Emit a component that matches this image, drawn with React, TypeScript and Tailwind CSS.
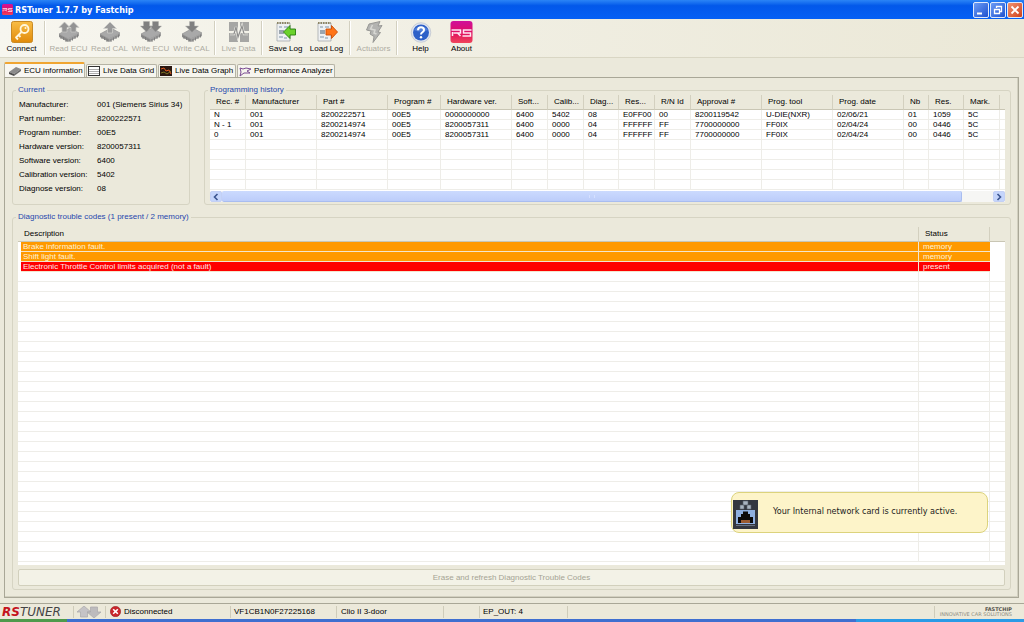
import type { ReactNode } from "react";

const chipBody = (
  <>
    <path d="M1 13 L12 7 L21 12 L10 18 Z" fill="#a9a9a9" stroke="#8d8d8d" strokeWidth="0.6" />
    <path d="M1 13 L10 18 V21 L1 16 Z" fill="#8a8a8a" />
    <path d="M10 18 L21 12 V15 L10 21 Z" fill="#9c9c9c" />
    <path d="M3 15v3M5.500 16v3M8 18v3M12 18v3M14.500 16.500v3M17 15v3M19.500 13.500v3" stroke="#7c7c7c" strokeWidth="0.9" />
  </>
);

function ReadEcu() {
  return (
    <svg viewBox="0 0 22 22" className="size-[22px]">
      {chipBody}
      <path d="M6.500 1 L12 6.500 H9 V11 H4 V6.500 H1 Z M15.500 1 L21 6.500 H18 V11 H13 V6.500 H10 Z" fill="#939393" stroke="#c9c9c5" strokeWidth="0.7" />
    </svg>
  );
}

function ReadCal() {
  return (
    <svg viewBox="0 0 22 22" className="size-[22px]">
      {chipBody}
      <path d="M11 1 L17.500 7.500 H13.500 V12 H8.500 V7.500 H4.500 Z" fill="#999" stroke="#d0d0cc" strokeWidth="0.7" />
    </svg>
  );
}

function WriteEcu() {
  return (
    <svg viewBox="0 0 22 22" className="size-[22px]">
      {chipBody}
      <path d="M3.500 0.500 H9.500 V5 H12 L6.500 11 L0.500 5 H3.500 Z M12.500 0.500 H18.500 V5 H21.500 L15.500 11 L10 5 H12.500 Z" fill="#808080" stroke="#a8a8a6" strokeWidth="0.4" />
    </svg>
  );
}

function WriteCal() {
  return (
    <svg viewBox="0 0 22 22" className="size-[22px]">
      {chipBody}
      <path d="M8.500 0.500 H13.500 V5 H17.500 L11 11.500 L4.500 5 H8.500 Z" fill="#808080" stroke="#b5b5b2" strokeWidth="0.5" />
    </svg>
  );
}

function KeyIcon() {
  return (
    <svg viewBox="0 0 22 22" className="size-[22px]">
      <defs>
        <linearGradient id="key-bg" x1="0" y1="0" x2="0" y2="1">
          <stop offset="0" stopColor="#f9bd45" />
          <stop offset="1" stopColor="#e18a0a" />
        </linearGradient>
      </defs>
      <rect x="0.5" y="0.5" width="21" height="21" rx="2" fill="url(#key-bg)" stroke="#c98a24" />
      <circle cx="13.500" cy="8" r="4" fill="none" stroke="#fff6dc" strokeWidth="1.800" />
      <circle cx="14.500" cy="7" r="1" fill="#fff6dc" />
      <path d="M10.500 11 L4.500 17 M5 16.500 L7 18.500 M7.500 14 L9.500 16" stroke="#fff6dc" strokeWidth="1.800" fill="none" />
    </svg>
  );
}

function LiveIcon() {
  return (
    <svg viewBox="0 0 22 22" className="size-[22px]">
      <path d="M1 1h9v9h-9zM12 1h9v9h-9zM1 12h9v9h-9zM12 12h9v9h-9z" fill="#a6a6a4" />
      <path d="M2 13 H6 L8 6 L10 16 L14 5 L16 13 H20" fill="none" stroke="#efeee8" strokeWidth="2.400" />
      <path d="M2 13 H6 L8 6 L10 16 L14 5 L16 13 H20" fill="none" stroke="#8d8d8c" strokeWidth="1.200" />
    </svg>
  );
}

function LogIcon({ load }: { load?: boolean }) {
  return (
    <svg viewBox="0 0 22 22" className="size-[22px]">
      <path d="M2 2h13v18h-13z" fill="#eef0f2" stroke="#a5a9ad" strokeWidth="0.8" />
      <path d="M2 2h13" stroke="#8d8564" strokeWidth="1.800" strokeDasharray="1.5 1" />
      <path d="M4 6h3M4 16h4M9 6h4M9 17h3" stroke="#7d93a8" strokeWidth="1" />
      <path d="M4 9h5v4h-5z" fill="#9ba5af" />
      {load ? (
        <path d="M21.500 11 L15.500 4.500 V8 H10 V14 H15.500 V17.500 Z" fill="#ff7417" stroke="#c94d08" strokeWidth="0.9" />
      ) : (
        <path d="M8.500 11 L15 4.500 V8 H20.500 V14 H15 V17.500 Z" fill="#6bd22c" stroke="#277c0d" strokeWidth="0.9" />
      )}
    </svg>
  );
}

function BoltIcon() {
  return (
    <svg viewBox="0 0 22 22" className="size-[22px]">
      <path d="M6 3 L17 0.500 L15 5 L19 4.500 L15 11 L17.500 11.500 L10 21.500 L11 15.500 L7 13 L8 10 L3.500 9 Z" fill="#b3b3b1" stroke="#929290" strokeWidth="0.9" />
      <path d="M9.500 4 L7.500 8 L12 9 L11 12 L13.500 13" fill="none" stroke="#d8d8d4" strokeWidth="1.500" />
    </svg>
  );
}

function HelpIcon() {
  return (
    <svg viewBox="0 0 22 22" className="size-[22px]">
      <circle cx="11" cy="11.500" r="9.800" fill="#dfe4ee" stroke="#b3bac8" strokeWidth="0.6" />
      <circle cx="11" cy="11.500" r="8" fill="#2d60c8" />
      <path d="M4 9 A8 7 0 0 1 18 9 Q11 12 4 9" fill="#6d98e8" opacity="0.6" />
      <path d="M8 9.200 Q8 6.300 11 6.300 Q14 6.300 14 9 Q14 10.500 12.300 11.300 Q11 12 11 13.500" fill="none" stroke="#fff" strokeWidth="2" />
      <circle cx="11" cy="16.300" r="1.200" fill="#fff" />
    </svg>
  );
}

function RsIcon({ small }: { small?: boolean }) {
  return (
    <svg viewBox="0 0 22 22" className={small ? "size-[11px] shrink-0" : "h-[22px] w-[23px]"}>
      <defs>
        <linearGradient id="rs-bg" x1="0" y1="0" x2="0" y2="1">
          <stop offset="0" stopColor="#d0109c" />
          <stop offset="0.55" stopColor="#e0105f" />
          <stop offset="1" stopColor="#f0455a" />
        </linearGradient>
      </defs>
      <rect width="22" height="22" rx="3" fill="url(#rs-bg)" />
      <path d="M1 9 H10 V12 H3 M7 12 L10 15 M2 11 V15 M21 9 H13 V12 H20 V15 H12" fill="none" stroke="#ffe9f4" strokeWidth="1.500" />
    </svg>
  );
}

type Tool = { label: string; icon: ReactNode; disabled?: boolean };

const toolGroups: Tool[][] = [
  [{ label: "Connect", icon: <KeyIcon /> }],
  [
    { label: "Read ECU", icon: <ReadEcu />, disabled: true },
    { label: "Read CAL", icon: <ReadCal />, disabled: true },
    { label: "Write ECU", icon: <WriteEcu />, disabled: true },
    { label: "Write CAL", icon: <WriteCal />, disabled: true },
  ],
  [{ label: "Live Data", icon: <LiveIcon />, disabled: true }],
  [
    { label: "Save Log", icon: <LogIcon /> },
    { label: "Load Log", icon: <LogIcon load /> },
  ],
  [{ label: "Actuators", icon: <BoltIcon />, disabled: true }],
  [
    { label: "Help", icon: <HelpIcon /> },
    { label: "About", icon: <RsIcon /> },
  ],
];

const current: [string, string][] = [
  ["Manufacturer:", "001 (Siemens Sirius 34)"],
  ["Part number:", "8200222571"],
  ["Program number:", "00E5"],
  ["Hardware version:", "8200057311"],
  ["Software version:", "6400"],
  ["Calibration version:", "5402"],
  ["Diagnose version:", "08"],
];

const columns: [string, string][] = [
  ["Rec. #", "w-[36px]"],
  ["Manufacturer", "w-[71px]"],
  ["Part #", "w-[71px]"],
  ["Program #", "w-[53px]"],
  ["Hardware ver.", "w-[71px]"],
  ["Soft...", "w-[36px]"],
  ["Calib...", "w-[36px]"],
  ["Diag...", "w-[35px]"],
  ["Res...", "w-[36px]"],
  ["R/N Id", "w-[36px]"],
  ["Approval #", "w-[71px]"],
  ["Prog. tool", "w-[71px]"],
  ["Prog. date", "w-[71px]"],
  ["Nb", "w-[25px]"],
  ["Res.", "w-[35px]"],
  ["Mark.", "w-[36px]"],
];

const history: string[][] = [
  ["N", "001", "8200222571", "00E5", "0000000000", "6400", "5402", "08", "E0FF00", "00", "8200119542", "U-DIE(NXR)", "02/06/21", "01", "1059", "5C"],
  ["N - 1", "001", "8200214974", "00E5", "8200057311", "6400", "0000", "04", "FFFFFF", "FF", "7700000000", "FF0IX", "02/04/24", "00", "0446", "5C"],
  ["0", "001", "8200214974", "00E5", "8200057311", "6400", "0000", "04", "FFFFFF", "FF", "7700000000", "FF0IX", "02/04/24", "00", "0446", "5C"],
];

const faults = [
  { text: "Brake information fault.", status: "memory", tone: "bg-[#ff9900] text-[#fff3d6]" },
  { text: "Shift light fault.", status: "memory", tone: "bg-[#ff9900] text-[#fff3d6]" },
  { text: "Electronic Throttle Control limits acquired (not a fault)", status: "present", tone: "bg-[#ff0000] text-[#ffe9e9]" },
];

const th = "h-[15px] border-b border-[#c9c6b4] bg-[#ebe9db] p-0 pl-[6px] text-left font-normal whitespace-nowrap";
const cell = "h-[10px] border-r border-b border-[#eeede8] p-0 pl-[4px] leading-[9px] whitespace-nowrap";
const legend = "-ml-[2px] px-[2px] leading-[10px] text-[#1f47ad]";
const group = "rounded-[3px] border border-[#d6d4c3] px-[5px]";

function CurrentPanel() {
  return (
    <fieldset className={`${group} w-[178px] shrink-0 pb-[7px]`}>
      <legend className={legend}>Current</legend>
      <dl className="grid grid-cols-[78px_1fr] pt-[3px] pl-px leading-[14px] whitespace-nowrap">
        {current.map(([k, v]) => (
          <div key={k} className="contents">
            <dt>{k}</dt>
            <dd>{v}</dd>
          </div>
        ))}
      </dl>
    </fieldset>
  );
}

function Arrow({ dir }: { dir: "left" | "right" }) {
  return (
    <button
      type="button"
      aria-label={`Scroll ${dir}`}
      className="flex h-[11px] w-[12px] items-center justify-center rounded-[2px] border border-[#c3d0f5] bg-[#c5d5fb]"
    >
      <svg viewBox="0 0 8 8" className="size-[8px]">
        <path d={dir === "left" ? "M5.500 1 L2.500 4 L5.500 7" : "M2.500 1 L5.500 4 L2.500 7"} fill="none" stroke="#3c5590" strokeWidth="1.600" />
      </svg>
    </button>
  );
}

function HistoryPanel() {
  const blank = Array.from({ length: 5 }, () => columns.map(() => ""));
  return (
    <fieldset className={`${group} min-w-0 flex-1 pb-[2px]`}>
      <legend className={legend}>Programming history</legend>
      <div className="overflow-hidden bg-white">
        <table className="w-full table-fixed border-separate border-spacing-0">
          <colgroup>
            {columns.map(([name, w]) => (
              <col key={name} className={w} />
            ))}
            <col />
          </colgroup>
          <thead>
            <tr>
              {columns.map(([name]) => (
                <th key={name} className={`${th} border-r border-r-[#d3d0bf]`}>
                  {name}
                </th>
              ))}
              <td className="border-b border-[#c9c6b4] bg-[#ebe9db] p-0" />
            </tr>
          </thead>
          <tbody>
            {[...history, ...blank].map((row, i) => (
              <tr key={i}>
                {row.map((v, j) => (
                  <td key={j} className={cell}>
                    {v}
                  </td>
                ))}
                <td className="border-b border-[#eeede8] p-0" />
              </tr>
            ))}
          </tbody>
        </table>
        <div className="mt-px flex h-[11px] bg-[#f6f6f4]">
          <Arrow dir="left" />
          <div className="flex flex-1">
            <div className="flex w-[96%] items-center justify-center rounded-[2px] border-r border-b border-[#a9bdf0] bg-linear-to-b from-[#cbdafe] to-[#bccdfa]">
              <span className="h-[3px] w-[6px] border-x border-[#d5e0ff]" />
            </div>
          </div>
          <Arrow dir="right" />
        </div>
      </div>
    </fieldset>
  );
}

function FaultPanel() {
  return (
    <fieldset className={`${group} mt-[7px] pb-[3px]`}>
      <legend className={legend}>Diagnostic trouble codes (1 present / 2 memory)</legend>
      <div className="mt-[5px] bg-white">
        <table className="w-full table-fixed border-separate border-spacing-0">
          <colgroup>
            <col className="w-[3px]" />
            <col />
            <col className="w-[71px]" />
            <col className="w-[15px]" />
          </colgroup>
          <thead>
            <tr>
              <th colSpan={2} className={`${th} border-r border-r-[#d3d0bf]`}>
                Description
              </th>
              <th className={`${th} border-r border-r-[#d3d0bf]`}>Status</th>
              <td className="border-b border-[#c9c6b4] bg-[#ebe9db] p-0" />
            </tr>
          </thead>
          <tbody>
            {faults.map((f) => (
              <tr key={f.text}>
                <td className="p-0" />
                <td className={`h-[10px] border-r border-b border-[#f3e6cf] p-0 pl-[2px] leading-[9px] ${f.tone}`}>{f.text}</td>
                <td className={`h-[10px] border-b border-[#f3e6cf] p-0 pl-[4px] leading-[9px] ${f.tone}`}>{f.status}</td>
                <td className="p-0" />
              </tr>
            ))}
            {Array.from({ length: 29 }, (_, i) => (
              <tr key={i}>
                <td className="h-[10px] border-b border-[#eeede8] p-0" />
                <td className={cell} />
                <td className={cell} />
                <td className="border-b border-[#eeede8] p-0" />
              </tr>
            ))}
          </tbody>
        </table>
        <div className="h-[3px]" />
      </div>
      <button
        type="button"
        disabled
        className="mt-[4px] block h-[17px] w-full rounded-[2px] border border-[#d2d0bd] bg-[#f3f2e7] text-center leading-[15px] text-[#a5a394]"
      >
        Erase and refresh Diagnostic Trouble Codes
      </button>
    </fieldset>
  );
}

const tabs = [
  {
    label: "ECU information",
    width: "w-[81px]",
    icon: (
      <svg viewBox="0 0 12 12" className="size-[12px] shrink-0">
        <path d="M0 7 L7 2 L12 4 L5 9 Z" fill="#8b8b8b" />
        <path d="M0 7 L5 9 V11 L0 9 Z" fill="#4d4d4d" />
        <path d="M5 9 L12 4 V6 L5 11 Z" fill="#6b6b6b" />
      </svg>
    ),
  },
  {
    label: "Live Data Grid",
    width: "w-[71px]",
    icon: (
      <svg viewBox="0 0 12 12" className="size-[12px] shrink-0">
        <rect x="0.5" y="1.500" width="11" height="9" fill="#fff" stroke="#333" />
        <path d="M1 4.500h10M1 6.500h10M1 8.500h10" stroke="#999" strokeWidth="0.8" />
      </svg>
    ),
  },
  {
    label: "Live Data Graph",
    width: "w-[78px]",
    icon: (
      <svg viewBox="0 0 12 12" className="size-[12px] shrink-0">
        <rect y="1" width="12" height="10" fill="#2a1710" />
        <path d="M1 4 L4 3 L6 6 L9 5 L11 9" fill="none" stroke="#e05a20" />
        <path d="M1 8 L4 7 L7 9 L11 6" fill="none" stroke="#8f8a28" strokeWidth="0.8" />
      </svg>
    ),
  },
  {
    label: "Performance Analyzer",
    width: "w-[98px]",
    icon: (
      <svg viewBox="0 0 12 12" className="size-[12px] shrink-0">
        <path d="M1 3 L4 4 L7 3 L12 4 L8 6 L11 8 L5 8 L1 11 L2 7 Z" fill="none" stroke="#7a4b92" />
      </svg>
    ),
  },
];

function WinButton({ label, tone, children }: { label: string; tone: string; children: ReactNode }) {
  return (
    <button type="button" aria-label={label} className={`flex size-[16px] items-center justify-center rounded-[2px] border border-[#dfe9fb] ${tone}`}>
      <svg viewBox="0 0 14 14" className="size-[14px]" fill="none" stroke="#fff">
        {children}
      </svg>
    </button>
  );
}

const statusCell = "flex h-[12px] items-center border-r border-[#cfccba]";

export default function App() {
  return (
    <div className="relative flex min-h-screen flex-col bg-[#ebe9db] font-['Liberation_Sans',sans-serif] text-[8px] leading-[12px] text-black">
      <header className="flex h-[19px] items-center bg-linear-to-b from-[#2b84f6] via-[#0358ea] via-30% to-[#0560f5] pr-px pl-[2px]">
        <RsIcon small />
        <h1 className="ml-[2px] flex-1 font-['DejaVu_Sans_Condensed','DejaVu_Sans',sans-serif] text-[9px] font-bold text-white">RSTuner 1.7.7 by Fastchip</h1>
        <div className="flex gap-px">
          <WinButton label="Minimize" tone="bg-linear-to-br from-[#6c9bf5] to-[#1f50cf]">
            <path d="M3 10.500h5" strokeWidth="2" />
          </WinButton>
          <WinButton label="Restore" tone="bg-linear-to-br from-[#6c9bf5] to-[#1f50cf]">
            <path d="M5.500 5V3.500h5v5h-2M3.500 6.500h5v4h-5z" strokeWidth="1.300" />
          </WinButton>
          <WinButton label="Close" tone="bg-linear-to-br from-[#f0916f] to-[#cf3f17]">
            <path d="M3.500 3.500l7 7M10.500 3.500l-7 7" strokeWidth="1.800" />
          </WinButton>
        </div>
      </header>

      <nav aria-label="Tools" className="flex h-[39px] items-stretch border-b border-[#d9d6c4] bg-linear-to-r from-[#f7f6ef] via-[#f0eee2] to-[#ebe8d7] pl-px">
        {toolGroups.map((g, i) => (
          <div key={i} className="flex">
            {i > 0 && <div className="mx-[2px] my-[2px] w-[2px] border-r border-l border-r-white border-l-[#d3d0c0]" />}
            {g.map((t) => (
              <button
                key={t.label}
                type="button"
                disabled={t.disabled}
                className="flex w-[41px] flex-col items-center pt-[2px] whitespace-nowrap disabled:text-[#aeaca2]"
              >
                {t.icon}
                <span className="leading-[12px]">{t.label}</span>
              </button>
            ))}
          </div>
        ))}
      </nav>

      <div role="tablist" className="mt-[4px] flex h-[15px] items-end gap-px px-[4px]">
        {tabs.map((t, i) => (
          <button
            key={t.label}
            type="button"
            role="tab"
            aria-selected={i === 0}
            className={`flex items-center rounded-t-[2px] border border-b-0 whitespace-nowrap ${t.width} ${
              i === 0 ? "h-[15px] gap-[3px] border-[#b9b7a6] border-t-2 border-t-[#f0a532] bg-[#f8f7f2] pl-[4px]" : "h-[13px] gap-[3px] border-[#b5b3a4] bg-[#f6f5ee] pl-px"
            }`}
          >
            {t.icon}
            {t.label}
          </button>
        ))}
      </div>

      <main className="mr-[5px] ml-[4px] flex-1 border border-[#a9a797] px-[7px] pt-[7px] pb-[6px] shadow-[inset_-1px_-1px_0_#d2d0c0]">
        <div className="flex gap-[14px]">
          <CurrentPanel />
          <HistoryPanel />
        </div>
        <FaultPanel />
      </main>

      <footer className="mt-[5px]">
        <div className="flex h-[16px] items-center border-t border-[#a9a797] bg-[#ece9da]">
          <div className={`${statusCell} w-[74px] pl-[2px] font-['DejaVu_Sans',sans-serif] text-[12px] font-bold italic`}>
            <span className="text-[#c4141c]">RS</span>
            <span className="font-normal text-[#444]">TUNER</span>
          </div>
          <div className={`${statusCell} w-[32px] pl-[3px]`}>
            <svg viewBox="0 0 24 12" className="h-[12px] w-[24px]">
              <path d="M7 0 L14 6 H10.500 V11 H3.500 V6 H0 Z" fill="#c5c3c6" stroke="#a9a7aa" strokeWidth="0.7" />
              <path d="M17 12 L10 6 H13.500 V1 H20.500 V6 H24 Z" fill="#bdbbbd" stroke="#a9a7aa" strokeWidth="0.7" />
            </svg>
          </div>
          <div className={`${statusCell} w-[125px] gap-[3px] pl-[4px]`}>
            <svg viewBox="0 0 11 11" className="size-[11px]">
              <circle cx="5.500" cy="5.500" r="5.200" fill="#c9262c" stroke="#8f1a1f" strokeWidth="0.5" />
              <path d="M3.200 3.200l4.600 4.600M7.800 3.200l-4.600 4.600" stroke="#fff" strokeWidth="1.600" />
            </svg>
            Disconnected
          </div>
          <div className={`${statusCell} w-[106px] pl-[3px]`}>VF1CB1N0F27225168</div>
          <div className={`${statusCell} w-[107px] pl-[4px]`}>Clio II 3-door</div>
          <div className={`${statusCell} w-[36px]`} />
          <div className={`${statusCell} w-[88px] pl-[3px]`}>EP_OUT: 4</div>
          <div className={`${statusCell} flex-1`} />
          <div className="pr-[12px] pl-[5px] text-right font-['DejaVu_Sans',sans-serif] text-[5px] leading-[5px] text-[#8d8b80]">
            <p className="font-bold text-[#55534c]">FASTCHIP</p>
            <p>INNOVATIVE CAR SOLUTIONS</p>
          </div>
        </div>
        <div className="flex h-[3px]">
          <div className="w-[67px] bg-[#4f9a4c]" />
          <div className="flex-1 bg-[#3f6fd0]" />
          <div className="w-[168px] bg-[#2b9be6]" />
        </div>
      </footer>

      <div
        role="status"
        className="absolute right-[36px] bottom-[89px] flex h-[41px] w-[257px] items-center rounded-[8px] border border-[#dcd37c] bg-[#fdf4c9] pl-px font-['DejaVu_Sans_Condensed','DejaVu_Sans',sans-serif] text-[9px] text-[#22221c]"
      >
        <svg viewBox="0 0 25 29" className="mt-[3px] h-[29px] w-[25px]">
          <rect width="25" height="29" fill="#34373f" />
          <path d="M10 1h5v4h-5zM7 5h4v4h-4zM14 5h4v4h-4z" fill="#a9b3bf" stroke="#5b626d" strokeWidth="0.6" />
          <rect x="3" y="10" width="19" height="14" fill="#8fb0e0" />
          <path d="M5 23 V17 H8 V14 H10 V11.500 H15 V14 H17 V17 H20 V23 Z" fill="#0c0a0a" />
          <path d="M8 20h9v3h-9z" fill="#9a5a30" />
          <path d="M3 25.500h19" stroke="#687080" />
        </svg>
        <p className="-mt-[3px] ml-[15px]">Your Internal network card is currently active.</p>
      </div>
    </div>
  );
}
